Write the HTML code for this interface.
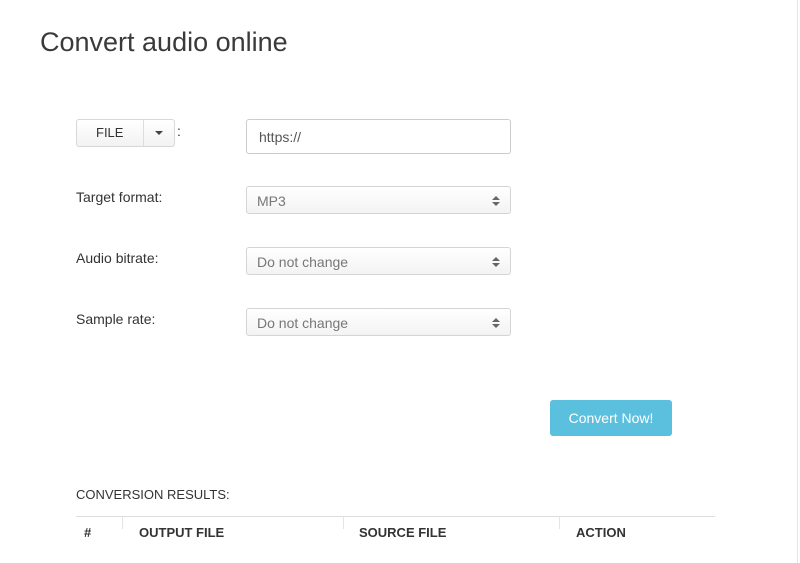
<!DOCTYPE html>
<html><head><style>
body{margin:0;width:800px;height:563px;background:#fff;font-family:"Liberation Sans",sans-serif;position:relative;overflow:hidden;color:#333}
.a{position:absolute}
.lbl{font-size:14px;color:#333}
.sel{position:absolute;left:246px;width:265px;border:1px solid #d5d5d5;border-radius:3px;background:linear-gradient(#fff,#f3f3f3);font-size:14px;color:#777;box-sizing:border-box}
.sel span{position:absolute;left:10px}
.arr{position:absolute;right:14px;top:8px;width:0}
.arr:before{content:"";position:absolute;border:4px solid transparent;border-bottom:4px solid #666;border-top:0;top:1px;left:-4px}
.arr:after{content:"";position:absolute;border:4px solid transparent;border-top:4px solid #666;border-bottom:0;top:7px;left:-4px}
.th{position:absolute;top:525px;font-size:13px;font-weight:bold;color:#333}
</style></head><body>
<div class="a" style="right:2px;top:0;width:1px;height:563px;background:#e6e6e6"></div>
<div class="a" style="left:40px;top:27px;font-size:27px;color:#3a3a3a">Convert audio online</div>

<div class="a" style="left:76px;top:119px;width:99px;height:28px;border:1px solid #d8d8d8;border-radius:3px;background:linear-gradient(#fff,#f2f2f2);box-sizing:border-box"></div>
<div class="a" style="left:143px;top:120px;width:1px;height:26px;background:#ddd"></div>
<div class="a" style="left:96px;top:125px;font-size:13px">FILE</div>
<div class="a" style="left:155px;top:131px;border:4px solid transparent;border-top:4px solid #444;border-bottom:0"></div>
<div class="a lbl" style="left:177px;top:123px">:</div>

<div class="a" style="left:246px;top:119px;width:265px;height:35px;border:1px solid #ccc;border-radius:3px;box-sizing:border-box"></div>
<div class="a" style="left:259px;top:129px;font-size:14px;color:#555">https://</div>

<div class="a lbl" style="left:76px;top:189px">Target format:</div>
<div class="sel" style="top:186px;height:28px"><span style="top:6px">MP3</span><i class="arr"></i></div>
<div class="a lbl" style="left:76px;top:250px">Audio bitrate:</div>
<div class="sel" style="top:247px;height:28px"><span style="top:6px">Do not change</span><i class="arr"></i></div>
<div class="a lbl" style="left:76px;top:311px">Sample rate:</div>
<div class="sel" style="top:308px;height:28px"><span style="top:6px">Do not change</span><i class="arr"></i></div>

<div class="a" style="left:550px;top:400px;width:122px;height:36px;background:#5bc0de;border-radius:3px;color:#fff;font-size:14px;text-align:center;line-height:36px">Convert Now!</div>

<div class="a" style="left:76px;top:487px;font-size:13px;color:#333">CONVERSION RESULTS:</div>
<div class="a" style="left:76px;top:516px;width:639px;height:1px;background:#ddd"></div>
<div class="a" style="left:122px;top:517px;width:1px;height:12px;background:#e5e5e5"></div>
<div class="a" style="left:343px;top:517px;width:1px;height:12px;background:#e5e5e5"></div>
<div class="a" style="left:559px;top:517px;width:1px;height:12px;background:#e5e5e5"></div>
<div class="th" style="left:84px">#</div>
<div class="th" style="left:139px">OUTPUT FILE</div>
<div class="th" style="left:359px">SOURCE FILE</div>
<div class="th" style="left:576px">ACTION</div>
</body></html>
